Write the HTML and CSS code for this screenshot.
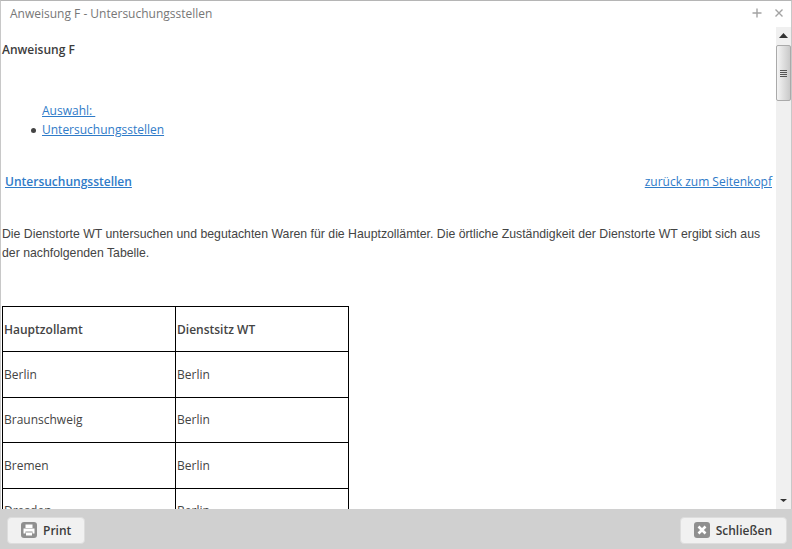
FILE: index.html
```html
<!DOCTYPE html>
<html lang="de">
<head>
<meta charset="utf-8">
<title>Anweisung F - Untersuchungsstellen</title>
<link rel="stylesheet" href="styles.css">
</head>
<body>
<div class="dialog">
  <header class="titlebar">
    <span class="title">Anweisung F - Untersuchungsstellen</span>
    <span class="tools">
      <svg class="tool" width="10" height="10" viewBox="0 0 10 10"><path d="M5 0.5V9.5M0.5 5H9.5" stroke="#a3a3a3" stroke-width="1.4" fill="none"/></svg>
      <svg class="tool" width="10" height="10" viewBox="0 0 10 10"><path d="M1.5 1.5L8.5 8.5M8.5 1.5L1.5 8.5" stroke="#a3a3a3" stroke-width="1.4" fill="none"/></svg>
    </span>
  </header>
  <div class="middle">
    <main class="content">
      <p class="heading">Anweisung F</p>
      <div class="nav">
        <a class="nav-first" href="#">Auswahl: </a>
        <ul class="nav-list"><li><a href="#">Untersuchungsstellen</a></li></ul>
      </div>
      <div class="section-head">
        <a class="section-link" href="#">Untersuchungsstellen</a>
        <a href="#">zurück zum Seitenkopf</a>
      </div>
      <p class="para">Die Dienstorte WT untersuchen und begutachten Waren für die Hauptzollämter. Die örtliche Zuständigkeit der Dienstorte WT ergibt sich aus der nachfolgenden Tabelle.</p>
      <table class="data">
        <tr><th>Hauptzollamt</th><th>Dienstsitz WT</th></tr>
        <tr><td>Berlin</td><td>Berlin</td></tr>
        <tr><td>Braunschweig</td><td>Berlin</td></tr>
        <tr><td>Bremen</td><td>Berlin</td></tr>
        <tr><td>Dresden</td><td>Berlin</td></tr>
      </table>
    </main>
    <div class="scrollbar">
      <div class="arrow"><svg width="9" height="5" viewBox="0 0 9 5"><path d="M4.5 0L9 5H0Z" fill="#333"/></svg></div>
      <div class="track">
        <div class="thumb"><span class="grip"></span><span class="grip"></span><span class="grip"></span><span class="grip"></span></div>
      </div>
      <div class="arrow"><svg width="7" height="3" viewBox="0 0 7 3"><path d="M0 0H7L3.5 3Z" fill="#333"/></svg></div>
    </div>
  </div>
  <footer class="footer">
    <button class="btn" type="button">
      <span class="btn-icon">
        <svg width="16" height="16" viewBox="0 0 16 16"><path d="M4.5 2.5H11.5V6H4.5Z M2.5 6.5H13.5V11.5H11.5V9.5H4.5V11.5H2.5Z M5 10.5H11V13.5H5Z" fill="#fff"/></svg>
      </span>Print
    </button>
    <button class="btn btn-close" type="button">
      <span class="btn-icon">
        <svg width="16" height="16" viewBox="0 0 16 16"><path d="M4.5 4.5L11.5 11.5M11.5 4.5L4.5 11.5" stroke="#fff" stroke-width="2.6" fill="none"/></svg>
      </span>Schließen
    </button>
  </footer>
</div>
</body>
</html>
```
FILE: styles.css
```css
* { box-sizing: border-box; }
html, body { margin: 0; height: 100%; overflow: hidden; }
body { font-family: "Open Sans", sans-serif; font-size: 12px; color: #444; background: #fff; }
.dialog { width: 792px; height: 549px; display: flex; flex-direction: column; border-top: 1px solid #b5b5b5; border-left: 1px solid #c8c8c8; border-right: 1px solid #c8c8c8; }
.titlebar { height: 26px; flex: none; display: flex; align-items: center; justify-content: space-between; padding: 0 7px 2px 9px; background: #fff; }
.title { color: #777; font-size: 12px; }
.tools { display: flex; gap: 12px; align-items: center; }
.tool { display: block; }
.middle { flex: 1; display: flex; min-height: 0; }
.content { flex: 1; min-width: 0; overflow: hidden; padding: 0 1px; }
.heading { margin: 14px 0 0; font-weight: 600; line-height: 17px; color: #3c3c3c; }
.nav { margin-top: 43px; }
a { color: #2f7bc8; }
.nav-first { display: block; margin-left: 40px; line-height: 19px; white-space: pre; }
.nav-list { margin: 0; padding: 0 0 0 40px; line-height: 19px; list-style: none; }
.nav-list li::before { content: ""; display: inline-block; width: 5px; height: 5px; margin: 0 6px 1px -11px; border-radius: 50%; background: #444; }
.section-head { display: flex; justify-content: space-between; margin-top: 33px; padding: 0 3px; line-height: 19px; }
.section-link { font-weight: 600; }
.para { margin: 34px 0 0; font-family: "Liberation Sans", Arial, sans-serif; font-size: 12.29px; line-height: 19px; color: #444; }
.data { margin-top: 43px; border-collapse: collapse; width: 347px; table-layout: fixed; }
.data th, .data td { border: 1px solid #000; height: 45.5px; padding: 0 1px; text-align: left; font-size: 12px; }
.data th { font-weight: 600; height: 45px; }
.scrollbar { width: 15px; flex: none; display: flex; flex-direction: column; background: #f0f0f0; }
.arrow { height: 17px; flex: none; display: flex; align-items: center; justify-content: center; }
.track { flex: 1; min-height: 0; }
.thumb { margin: 1px 0 0; width: 15px; height: 56px; border: 1px solid #aaa; border-radius: 2px; background: linear-gradient(to right, #f4f4f4, #c9c9c9); display: flex; flex-direction: column; justify-content: center; align-items: center; gap: 1px; }
.grip { width: 7px; height: 1px; background: #555; }
.footer { height: 40px; flex: none; display: flex; justify-content: space-between; align-items: center; padding: 2px 5px 0 7px; background: #d0d0d0; margin: 0 -1px; }
.btn { height: 27px; display: flex; align-items: center; gap: 6px; padding: 0 13px; border: 1px solid #ddd; border-radius: 4px; background: #f1f1f1; font: 600 12px "Open Sans", sans-serif; color: #3c3c3c; }
.btn-close { padding-right: 14px; }
.btn-icon { width: 16px; height: 16px; background: #8f8f8f; border-radius: 3px; display: block; }
.btn-icon svg { display: block; }
```
